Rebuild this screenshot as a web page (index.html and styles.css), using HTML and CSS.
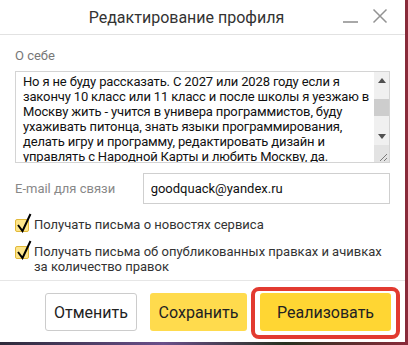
FILE: index.html
```html
<!DOCTYPE html>
<html lang="ru">
<head>
    <meta charset="UTF-8">
    <meta name="viewport" content="width=device-width, initial-scale=1.0">
    <title>Редактирование профиля</title>
    <link rel="stylesheet" href="styles.css">
</head>
<body>
    <div class="dialog">
        <div class="head">
            <div class="title">Редактирование профиля</div>
            <div class="controls">
                <span class="min"></span>
                <svg class="close" width="16" height="16" viewBox="0 0 16 16">
                    <path d="M1.5 1.5 L14.5 14.5 M14.5 1.5 L1.5 14.5" stroke="#939393" stroke-width="1.5" fill="none"/>
                </svg>
            </div>
        </div>
        <div class="content">
            <div class="label">О себе</div>
            <div class="about">
                <textarea class="about-text">Но я не буду рассказать. С 2027 или 2028 году если я закончу 10 класс или 11 класс и после школы я уезжаю в Москву жить - учится в универа программистов, буду ухаживать питонца, знать языки программирования, делать игру и программу, редактировать дизайн и управлять с Народной Карты и любить Москву, да.</textarea>
                <div class="scroll">
                    <span class="arrow"><svg width="8" height="5" viewBox="0 0 8 5"><path d="M0 5 L4 0 L8 5 Z" fill="#505050"/></svg></span>
                    <span class="track"><span class="thumb"></span></span>
                    <span class="arrow"><svg width="8" height="5" viewBox="0 0 8 5"><path d="M0 0 L4 5 L8 0 Z" fill="#505050"/></svg></span>
                    <span class="grip"><svg width="15" height="17" viewBox="0 0 15 17"><path d="M13 9 L6 16 M13 13 L10 16" stroke="#7a7a7a" stroke-width="1" fill="none"/></svg></span>
                </div>
            </div>
            <div class="row">
                <span class="row-label">E-mail для связи</span>
                <input class="email" type="text" value="goodquack@yandex.ru">
            </div>
            <div class="check">
                <span class="box"><svg width="16" height="22" viewBox="0 0 16 22"><path d="M2 12 L6.5 18 L14.5 1" stroke="#000" stroke-width="2" fill="none"/></svg></span>
                <span>Получать письма о новостях сервиса</span>
            </div>
            <div class="check">
                <span class="box"><svg width="16" height="22" viewBox="0 0 16 22"><path d="M2 12 L6.5 18 L14.5 1" stroke="#000" stroke-width="2" fill="none"/></svg></span>
                <span>Получать письма об опубликованных правках и ачивках за количество правок</span>
            </div>
        </div>
        <div class="foot">
            <button class="btn btn-cancel">Отменить</button>
            <button class="btn btn-save">Сохранить</button>
            <button class="btn btn-go">Реализовать</button>
        </div>
    </div>
</body>
</html>
```

FILE: styles.css
```css
body {
    margin: 0;
    padding: 0;
    background: linear-gradient(90deg, #2d2a3a, #6a4f8a 40%, #27301f 70%, #8a2a3a);
    font-family: Roboto, "Noto Sans", sans-serif;
    overflow: hidden;
}
.dialog {
    width: 405px;
    height: 342px;
    background: #fff;
    display: flex;
    flex-direction: column;
}
.head {
    height: 34px;
    border-bottom: 1px solid #e2e2e2;
    display: grid;
    align-items: center;
}
.title, .controls {
    grid-area: 1 / 1;
}
.title {
    text-align: center;
    padding-right: 32px;
    font-size: 16px;
    color: #333;
}
.controls {
    justify-self: end;
    display: flex;
    align-items: center;
    gap: 14px;
    padding-right: 17px;
}
.min {
    width: 15px;
    height: 2px;
    background: #a8a8a8;
    margin-top: 10px;
}
.close {
    display: block;
    margin-top: -2px;
}
.content {
    padding: 13px 15px 0 15px;
    flex: 1;
    border-bottom: 1px solid #e6e6e6;
}
.label {
    font-size: 13px;
    line-height: 16px;
    color: #777;
}
.about {
    display: flex;
    box-sizing: border-box;
    width: 375px;
    height: 92px;
    margin-top: 7px;
    border: 1px solid #d4d4d4;
}
.about-text {
    flex: 1;
    border: none;
    outline: none;
    resize: none;
    overflow: hidden;
    padding: 2px 2px 0 7px;
    font-family: inherit;
    font-size: 13px;
    letter-spacing: -0.15px;
    line-height: 15px;
    color: #111;
}
.scroll {
    width: 15px;
    display: flex;
    flex-direction: column;
    background: #f0f0f0;
}
.arrow {
    height: 17px;
    display: flex;
    align-items: center;
    justify-content: center;
}
.track {
    flex: 1;
    padding-top: 10px;
}
.thumb {
    display: block;
    height: 17px;
    background: #cdcdcd;
}
.grip {
    height: 17px;
    background: #e3e3e3;
}
.grip svg {
    display: block;
}
.row {
    display: flex;
    align-items: center;
    margin-top: 10px;
}
.row-label {
    width: 128px;
    font-size: 13px;
    color: #888;
}
.email {
    box-sizing: border-box;
    width: 248px;
    height: 31px;
    border: 1px solid #cfcfcf;
    padding: 0 7px;
    font-family: inherit;
    font-size: 13px;
    color: #111;
}
.check {
    display: flex;
    align-items: flex-start;
    gap: 5px;
    margin-top: 13px;
    font-size: 13px;
    line-height: 15px;
    color: #333;
}
.check + .check {
    margin-top: 12px;
}
.box {
    flex: none;
    width: 14px;
    height: 13px;
    box-sizing: border-box;
    margin-top: 1.5px;
    background: #fde58a;
    border: 1px solid #e2b93a;
    border-radius: 2px;
    position: relative;
}
.box svg {
    position: absolute;
    left: 0;
    top: -7px;
}
.foot {
    display: flex;
    justify-content: flex-end;
    gap: 13px;
    padding: 12px 14px 11px 0;
}
.btn {
    height: 38px;
    border-radius: 3px;
    border: none;
    font-family: inherit;
    font-size: 16px;
    color: #222;
    padding: 0 8px;
}
.btn-cancel {
    width: 92px;
    background: #fff;
    border: 1px solid #cccccc;
}
.btn-save {
    width: 97px;
    background: #ffdb4d;
}
.btn-go {
    width: 131px;
    background: #ffd633;
    position: relative;
}
.btn-go::after {
    content: "";
    position: absolute;
    left: -9px;
    right: -9px;
    top: -6px;
    bottom: -8px;
    border: 4px solid #e23a30;
    border-radius: 8px;
    box-sizing: border-box;
}
```
